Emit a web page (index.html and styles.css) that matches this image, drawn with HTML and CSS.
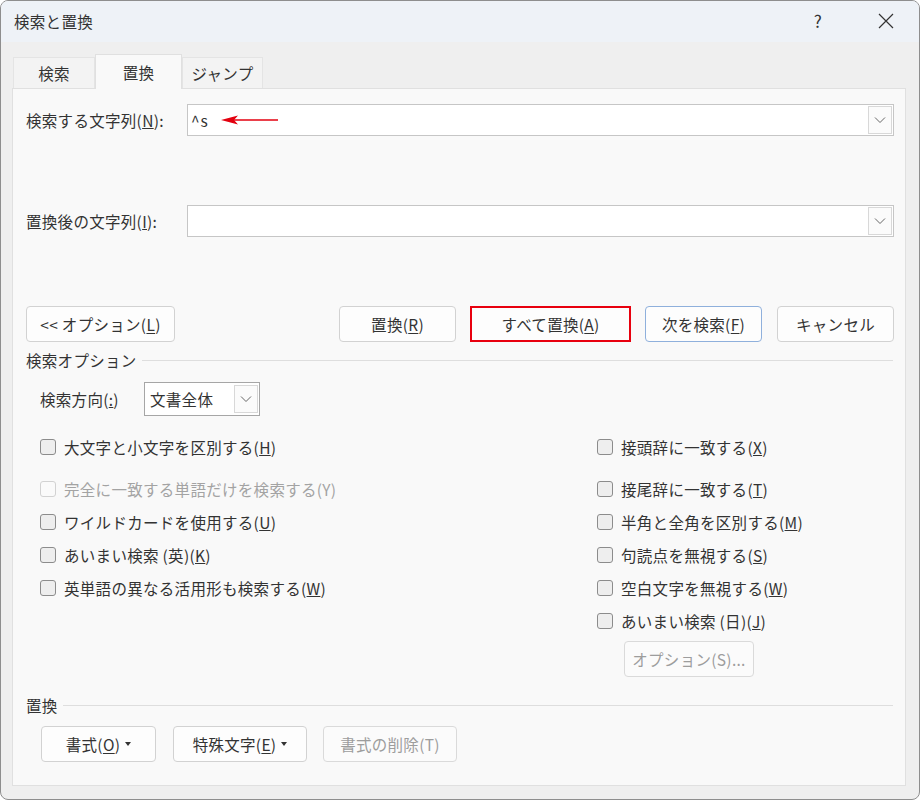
FILE: index.html
```html
<!DOCTYPE html>
<html lang="ja">
<head>
<meta charset="utf-8">
<title>検索と置換</title>
<link rel="stylesheet" href="styles.css">
</head>
<body>
<div class="window">
  <div class="titlebar">
    <span class="title">検索と置換</span>
    <span class="help">?</span>
    <span class="close"><svg width="16" height="16" viewBox="0 0 16 16"><path d="M1 1L15 15M15 1L1 15" stroke="#333" stroke-width="1.2" fill="none"/></svg></span>
  </div>
  <div class="tabs">
    <div class="tab">検索</div>
    <div class="tab active">置換</div>
    <div class="tab">ジャンプ</div>
  </div>
  <div class="panel">
    <div class="field">
      <label class="flabel">検索する文字列(<u>N</u>):</label>
      <div class="combo">
        <span class="ctext">^s</span>
        <svg class="redarrow" width="58" height="10" viewBox="0 0 58 10"><path d="M0 5L17 0.5L13 5L17 9.5Z" fill="#e3000f"/><path d="M13 5H57" stroke="#e3000f" stroke-width="1.6"/></svg>
        <span class="dd"><svg width="12" height="8" viewBox="0 0 12 8"><path d="M1 1.5L6 6.5L11 1.5" stroke="#666" stroke-width="1" fill="none"/></svg></span>
      </div>
    </div>
    <div class="field second">
      <label class="flabel">置換後の文字列(<u>I</u>):</label>
      <div class="combo">
        <span class="dd"><svg width="12" height="8" viewBox="0 0 12 8"><path d="M1 1.5L6 6.5L11 1.5" stroke="#666" stroke-width="1" fill="none"/></svg></span>
      </div>
    </div>
    <div class="btnrow">
      <button class="btn wide">&lt;&lt; オプション(<u>L</u>)</button>
      <div class="btngroup">
        <button class="btn">置換(<u>R</u>)</button>
        <button class="btn redbox">すべて置換(<u>A</u>)</button>
        <button class="btn default">次を検索(<u>F</u>)</button>
        <button class="btn">キャンセル</button>
      </div>
    </div>
    <div class="heading"><span>検索オプション</span></div>
    <div class="dirrow">
      <span class="dirlabel">検索方向(<u>:</u>)</span>
      <div class="select">
        <span>文書全体</span>
        <span class="dd"><svg width="12" height="8" viewBox="0 0 12 8"><path d="M1 1.5L6 6.5L11 1.5" stroke="#666" stroke-width="1" fill="none"/></svg></span>
      </div>
    </div>
    <div class="checks">
      <div class="col left">
        <div class="chk first"><span class="box"></span>大文字と小文字を区別する(<u>H</u>)</div>
        <div class="chk disabled"><span class="box"></span>完全に一致する単語だけを検索する(Y)</div>
        <div class="chk"><span class="box"></span>ワイルドカードを使用する(<u>U</u>)</div>
        <div class="chk"><span class="box"></span>あいまい検索 (英)(<u>K</u>)</div>
        <div class="chk"><span class="box"></span>英単語の異なる活用形も検索する(<u>W</u>)</div>
      </div>
      <div class="col right">
        <div class="chk first"><span class="box"></span>接頭辞に一致する(<u>X</u>)</div>
        <div class="chk"><span class="box"></span>接尾辞に一致する(<u>T</u>)</div>
        <div class="chk"><span class="box"></span>半角と全角を区別する(<u>M</u>)</div>
        <div class="chk"><span class="box"></span>句読点を無視する(<u>S</u>)</div>
        <div class="chk"><span class="box"></span>空白文字を無視する(<u>W</u>)</div>
        <div class="chk"><span class="box"></span>あいまい検索 (日)(<u>J</u>)</div>
        <button class="btn optbtn" disabled>オプション(S)...</button>
      </div>
    </div>
    <div class="heading rep"><span>置換</span></div>
    <div class="bottomrow">
      <button class="btn fmt">書式(<u>O</u>) <svg class="tri" width="6" height="4" viewBox="0 0 6 4"><path d="M0 0H6L3 4Z" fill="#333"/></svg></button>
      <button class="btn spc">特殊文字(<u>E</u>) <svg class="tri" width="6" height="4" viewBox="0 0 6 4"><path d="M0 0H6L3 4Z" fill="#333"/></svg></button>
      <button class="btn spc" disabled>書式の削除(T)</button>
    </div>
  </div>
</div>
</body>
</html>
```
FILE: styles.css
```css
* { box-sizing: border-box; }
html, body { margin: 0; padding: 0; background: #ffffff; }
body {
  font-family: "Noto Sans CJK JP", "Noto Sans", sans-serif;
  font-size: 15.5px;
  letter-spacing: 0.3px;
  color: #333333;
}
.window {
  width: 920px;
  height: 800px;
  border: 1px solid #8e8e8e;
  border-radius: 8px;
  background: #efefef;
  overflow: hidden;
  display: flex;
  flex-direction: column;
}
.titlebar {
  height: 41px;
  background: #eef2f7;
  display: flex;
  align-items: center;
  padding-left: 13px;
  flex-shrink: 0;
}
.title { line-height: 20px; margin-top: -1px; }
.help { margin-left: auto; font-size: 17px; color: #333; margin-right: 56px; margin-top: -2px; }
.close { display: flex; margin-right: 25px; margin-top: -2px; }
.tabs {
  display: flex;
  align-items: flex-end;
  padding-left: 12px;
  margin-top: 12px;
  height: 34px;
  flex-shrink: 0;
}
.tab {
  height: 31px;
  width: 82px;
  display: flex;
  align-items: center;
  justify-content: center;
  background: #f3f3f3;
  border: 1px solid #e4e4e4;
  border-bottom: none;
  line-height: 20px;
}
.tab.active {
  height: 35px;
  width: 87px;
  background: #f9f9f9;
  border-color: #e0e0e0;
  margin-bottom: -1px;
  position: relative;
  z-index: 1;
  padding-bottom: 1px;
}
.tab:last-child { width: 81px; }
.panel {
  margin: 0 13px 13px 11px;
  flex: 1;
  background: #f9f9f9;
  border: 1px solid #e0e0e0;
  padding: 15px 11px 0 13px;
  display: flex;
  flex-direction: column;
}
.field { display: flex; align-items: center; height: 32px; }
.field.second { margin-top: 69px; }
.flabel { width: 161px; line-height: 20px; }
.combo {
  flex: 1;
  height: 32px;
  background: #ffffff;
  border: 1px solid #c6c6c6;
  display: flex;
  align-items: center;
  padding-left: 3px;
}
.ctext { line-height: 20px; letter-spacing: 1px; }
.redarrow { margin-left: 12px; margin-top: -1px; }
.dd {
  margin-left: auto;
  margin-right: 1px;
  width: 24px;
  height: 28px;
  border: 1px solid #d8d8d8;
  background: #fbfbfb;
  display: flex;
  align-items: center;
  justify-content: center;
}
button { font-family: inherit; font-size: 15.5px; letter-spacing: 0.3px; color: #333; }
.btn {
  height: 36px;
  background: #fdfdfd;
  border: 1px solid #d2d2d2;
  border-radius: 4px;
  padding: 0;
  line-height: 20px;
  display: flex;
  align-items: center;
  justify-content: center;
}
.btn u { text-underline-offset: 2px; }
.btnrow { display: flex; margin-top: 69px; }
.btn.wide { width: 149px; }
.btngroup { margin-left: auto; display: flex; gap: 14px; }
.btngroup .btn { width: 117px; }
.btngroup .btn.redbox { width: 161px; border: 2px solid #e8000e; border-radius: 0; }
.btngroup .btn.default { border-color: #8fb0dc; }
.btngroup .btn:last-child { margin-left: 1px; }
.heading {
  display: flex;
  align-items: center;
  margin-top: 8px;
  height: 20px;
  line-height: 20px;
  margin-right: 1px;
}
.heading::after {
  content: "";
  flex: 1;
  height: 1px;
  background: #dedede;
  margin-left: 5px;
}
.heading.rep { margin-top: 18px; }
.dirrow { display: flex; align-items: center; margin-top: 12px; padding-left: 14px; }
.dirlabel { width: 104px; line-height: 20px; }
.select {
  width: 116px;
  height: 34px;
  background: #fff;
  border: 1px solid #a6a6a6;
  display: flex;
  align-items: center;
  padding-left: 5px;
  line-height: 20px;
}
.select .dd { width: 24px; height: 28px; margin-right: 1px; }
.checks { display: flex; margin-top: 14px; padding-left: 14px; }
.col { display: flex; flex-direction: column; }
.col.left { width: 557px; }
.chk { height: 33px; display: flex; align-items: center; line-height: 20px; }
.chk.first { margin-bottom: 9px; }
.box {
  width: 16px;
  height: 16px;
  border: 1px solid #8c8c8c;
  border-radius: 3px;
  background: #eeeeee;
  margin-right: 8px;
  flex-shrink: 0;
}
.chk.disabled { color: #a3a3a3; }
.chk.disabled .box { border-color: #d2d2d2; background: #fafafa; }
.btn[disabled] { color: #9d9d9d; background: #fbfbfb; border-color: #dadada; }
.optbtn { width: 130px; margin-top: 4px; margin-left: 27px; }
.bottomrow { display: flex; margin-top: 11px; padding-left: 15px; }
.btn.fmt { width: 115px; margin-right: 17px; }
.btn.spc { width: 134px; margin-right: 16px; }
.tri { margin-left: 5px; }
```
